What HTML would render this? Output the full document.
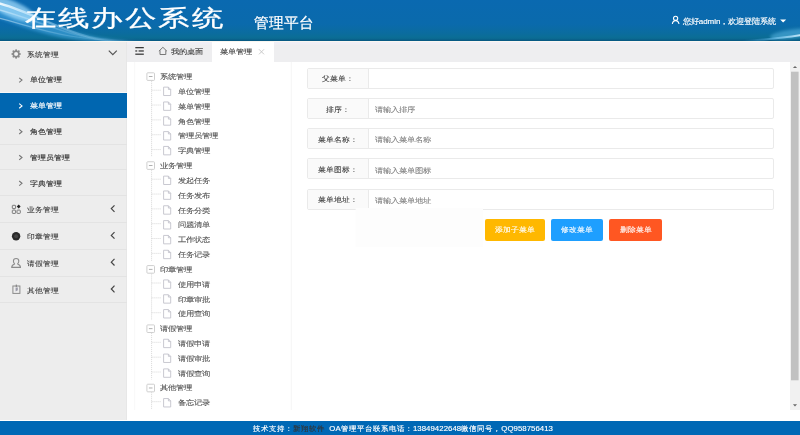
<!DOCTYPE html>
<html><head><meta charset="utf-8"><style>
*{margin:0;padding:0;box-sizing:border-box}
html,body{width:800px;height:435px;overflow:hidden;background:#fff;font-family:"Liberation Sans",sans-serif;}
div,span,svg{position:absolute;white-space:nowrap}
.tx{transform-origin:0 0}
#hdr{left:0;top:0;width:800px;height:41px;background:linear-gradient(to bottom,#0a69b0 0px,#0a6aac 24px,#0b6c9f 33px,#0b6e96 37px,#0a6890 39px,#075a84 40.2px,#075a84 41px);overflow:hidden}
#hdrline{left:0;top:40.8px;width:800px;height:1.8px;background:#faf7f1}
#side{left:0;top:42px;width:126.6px;height:378px;background:#ededed;border-right:1px solid #e7e7e7}
.mi{left:0;width:126.5px;border-bottom:1px solid #e3e3e3}
.act{background:#0066b0;border-bottom:none}
#tabs{left:126.6px;top:42px;width:674px;height:20px;background:linear-gradient(#f0eff6 0px,#f0eff6 2px,#eeeef0 3px,#eeeef0 20px)}
#tab2{left:212px;top:42px;width:62px;height:20px;background:#fff}
#foot{left:0;top:420.5px;width:800px;height:15px;background:#0068b5}
.fl{left:306.5px;width:467px;height:21px;border:1px solid #eaeaea;background:#fff;border-radius:2px}
.fl .lb{left:0;top:0;width:61.5px;height:19px;background:#fafafa;border-right:1px solid #eaeaea}
.btn{top:219px;height:21.5px;border-radius:2px}
</style></head><body>
<div id="hdr"><svg style="left:0;top:0" width="800" height="41" viewBox="0 0 800 41">
<defs>
<filter id="bl" x="-20%" y="-50%" width="140%" height="200%"><feGaussianBlur stdDeviation="1.6"/></filter>
<filter id="bl2" x="-20%" y="-50%" width="140%" height="200%"><feGaussianBlur stdDeviation="0.7"/></filter>
<radialGradient id="g1" cx="0.3" cy="0.4" r="0.6"><stop offset="0" stop-color="#8fd6ff" stop-opacity="0.85"/><stop offset="1" stop-color="#3aa0e0" stop-opacity="0"/></radialGradient>
<linearGradient id="s1" x1="0" x2="1"><stop offset="0" stop-color="#fff" stop-opacity="0.95"/><stop offset="0.12" stop-color="#e0f4ff" stop-opacity="0.8"/><stop offset="0.35" stop-color="#c8ecff" stop-opacity="0.45"/><stop offset="1" stop-color="#9ad8ff" stop-opacity="0"/></linearGradient>
<linearGradient id="s2" x1="1" x2="0"><stop offset="0" stop-color="#e8f8ff" stop-opacity="0.95"/><stop offset="0.5" stop-color="#7fd0ff" stop-opacity="0.5"/><stop offset="1" stop-color="#4ab0f0" stop-opacity="0"/></linearGradient>
</defs>
<path d="M-2 3 C 18 8, 32 16, 60 27 C 80 35, 110 41, 150 42 L 150 44 C 110 44, 80 42, 50 35 C 30 30, 15 24, -2 18 Z" fill="#4fb0ec" opacity="0.5" filter="url(#bl)"/>
<ellipse cx="12" cy="9" rx="26" ry="8" transform="rotate(24 12 9)" fill="#a8e0ff" opacity="0.7" filter="url(#bl)"/>
<path d="M-4 2.5 C 15 7, 28 14, 60 27 S 100 40, 140 42" fill="none" stroke="url(#s1)" stroke-width="2.2" filter="url(#bl2)"/>
<path d="M-4 9 C 20 15, 40 24, 70 33 S 120 42, 180 43" fill="none" stroke="url(#s1)" stroke-width="1.4" filter="url(#bl2)" opacity="0.45"/>
<path d="M-4 17.5 C 20 23, 40 31, 70 36 S 120 42, 160 43" fill="none" stroke="url(#s1)" stroke-width="1.2" filter="url(#bl2)" opacity="0.5"/>
<ellipse cx="792" cy="34" rx="22" ry="4.5" transform="rotate(-8 792 34)" fill="#6cc6f4" opacity="0.45" filter="url(#bl)"/>
<path d="M742 41 C 765 40, 782 38, 805 34.5" fill="none" stroke="url(#s2)" stroke-width="2" filter="url(#bl2)"/>
</svg></div><div id="hdrline"></div>
<div class="tx" style="left:24.80px;top:1.39px;line-height:47.25px;font-size:31.5px;color:#fff;transform:scaleY(0.73);letter-spacing:1.35px;-webkit-text-stroke:0.35px currentColor;">在线办公系统</div>
<div class="tx" style="left:253.50px;top:12.44px;line-height:22.50px;font-size:15.0px;color:#fff;transform:scaleY(1.02);-webkit-text-stroke:0.2px currentColor;">管理平台</div>
<div class="tx" style="left:682.70px;top:15.62px;line-height:12.00px;font-size:8px;color:#fff;transform:scaleY(0.98);-webkit-text-stroke:0.15px currentColor;">您好admin，欢迎登陆系统</div>
<div id="side"></div>
<div class="mi" style="top:42px;height:25px;border-bottom:none"></div>
<div class="tx" style="left:26.60px;top:49.70px;line-height:12.15px;font-size:8.1px;color:#3a3a3a;transform:scaleY(0.9);-webkit-text-stroke:0.1px currentColor;">系统管理</div>
<div class="mi" style="top:67.20px;height:25.8px;border-bottom:none"></div>
<div class="tx" style="left:30.00px;top:74.47px;line-height:12.45px;font-size:8.3px;color:#333;transform:scaleY(0.88);-webkit-text-stroke:0.15px currentColor;">单位管理</div>
<div style="left:0;top:92.4px;width:126.5px;height:1px;background:#f7f7f7"></div>
<div class="mi act" style="top:93.3px;height:24.7px"></div>
<div class="tx" style="left:30.00px;top:100.27px;line-height:12.45px;font-size:8.3px;color:#fff;transform:scaleY(0.88);-webkit-text-stroke:0.15px currentColor;">菜单管理</div>
<div class="mi" style="top:118.80px;height:25.8px"></div>
<div class="tx" style="left:30.00px;top:126.07px;line-height:12.45px;font-size:8.3px;color:#333;transform:scaleY(0.88);-webkit-text-stroke:0.15px currentColor;">角色管理</div>
<div class="mi" style="top:144.60px;height:25.8px"></div>
<div class="tx" style="left:30.00px;top:151.87px;line-height:12.45px;font-size:8.3px;color:#333;transform:scaleY(0.88);-webkit-text-stroke:0.15px currentColor;">管理员管理</div>
<div class="mi" style="top:170.40px;height:25.8px"></div>
<div class="tx" style="left:30.00px;top:177.67px;line-height:12.45px;font-size:8.3px;color:#333;transform:scaleY(0.88);-webkit-text-stroke:0.15px currentColor;">字典管理</div>
<div class="mi" style="top:196.20px;height:26.8px"></div>
<div class="tx" style="left:26.80px;top:205.20px;line-height:12.15px;font-size:8.1px;color:#3a3a3a;transform:scaleY(0.9);-webkit-text-stroke:0.1px currentColor;">业务管理</div>
<div class="mi" style="top:223.00px;height:26.8px"></div>
<div class="tx" style="left:26.80px;top:232.00px;line-height:12.15px;font-size:8.1px;color:#3a3a3a;transform:scaleY(0.9);-webkit-text-stroke:0.1px currentColor;">印章管理</div>
<div class="mi" style="top:249.80px;height:26.8px"></div>
<div class="tx" style="left:26.80px;top:258.80px;line-height:12.15px;font-size:8.1px;color:#3a3a3a;transform:scaleY(0.9);-webkit-text-stroke:0.1px currentColor;">请假管理</div>
<div class="mi" style="top:276.60px;height:26.8px"></div>
<div class="tx" style="left:26.80px;top:285.60px;line-height:12.15px;font-size:8.1px;color:#3a3a3a;transform:scaleY(0.9);-webkit-text-stroke:0.1px currentColor;">其他管理</div>
<div id="tabs"></div><div id="tab2"></div>
<div class="tx" style="left:170.60px;top:46.15px;line-height:12.45px;font-size:8.3px;color:#3a3a3a;transform:scaleY(0.85);-webkit-text-stroke:0.1px currentColor;">我的桌面</div>
<div class="tx" style="left:219.90px;top:46.15px;line-height:12.45px;font-size:8.3px;color:#3a3a3a;transform:scaleY(0.85);-webkit-text-stroke:0.1px currentColor;">菜单管理</div>
<div class="tx" style="left:159.60px;top:72.06px;line-height:12.15px;font-size:8.1px;color:#555;transform:scaleY(0.84);-webkit-text-stroke:0.12px currentColor;">系统管理</div>
<div class="tx" style="left:177.80px;top:86.89px;line-height:12.15px;font-size:8.1px;color:#555;transform:scaleY(0.84);-webkit-text-stroke:0.12px currentColor;">单位管理</div>
<div class="tx" style="left:177.80px;top:101.72px;line-height:12.15px;font-size:8.1px;color:#555;transform:scaleY(0.84);-webkit-text-stroke:0.12px currentColor;">菜单管理</div>
<div class="tx" style="left:177.80px;top:116.55px;line-height:12.15px;font-size:8.1px;color:#555;transform:scaleY(0.84);-webkit-text-stroke:0.12px currentColor;">角色管理</div>
<div class="tx" style="left:177.80px;top:131.38px;line-height:12.15px;font-size:8.1px;color:#555;transform:scaleY(0.84);-webkit-text-stroke:0.12px currentColor;">管理员管理</div>
<div class="tx" style="left:177.80px;top:146.21px;line-height:12.15px;font-size:8.1px;color:#555;transform:scaleY(0.84);-webkit-text-stroke:0.12px currentColor;">字典管理</div>
<div class="tx" style="left:159.60px;top:161.04px;line-height:12.15px;font-size:8.1px;color:#555;transform:scaleY(0.84);-webkit-text-stroke:0.12px currentColor;">业务管理</div>
<div class="tx" style="left:177.80px;top:175.87px;line-height:12.15px;font-size:8.1px;color:#555;transform:scaleY(0.84);-webkit-text-stroke:0.12px currentColor;">发起任务</div>
<div class="tx" style="left:177.80px;top:190.70px;line-height:12.15px;font-size:8.1px;color:#555;transform:scaleY(0.84);-webkit-text-stroke:0.12px currentColor;">任务发布</div>
<div class="tx" style="left:177.80px;top:205.53px;line-height:12.15px;font-size:8.1px;color:#555;transform:scaleY(0.84);-webkit-text-stroke:0.12px currentColor;">任务分类</div>
<div class="tx" style="left:177.80px;top:220.36px;line-height:12.15px;font-size:8.1px;color:#555;transform:scaleY(0.84);-webkit-text-stroke:0.12px currentColor;">问题清单</div>
<div class="tx" style="left:177.80px;top:235.19px;line-height:12.15px;font-size:8.1px;color:#555;transform:scaleY(0.84);-webkit-text-stroke:0.12px currentColor;">工作状态</div>
<div class="tx" style="left:177.80px;top:250.02px;line-height:12.15px;font-size:8.1px;color:#555;transform:scaleY(0.84);-webkit-text-stroke:0.12px currentColor;">任务记录</div>
<div class="tx" style="left:159.60px;top:264.85px;line-height:12.15px;font-size:8.1px;color:#555;transform:scaleY(0.84);-webkit-text-stroke:0.12px currentColor;">印章管理</div>
<div class="tx" style="left:177.80px;top:279.68px;line-height:12.15px;font-size:8.1px;color:#555;transform:scaleY(0.84);-webkit-text-stroke:0.12px currentColor;">使用申请</div>
<div class="tx" style="left:177.80px;top:294.51px;line-height:12.15px;font-size:8.1px;color:#555;transform:scaleY(0.84);-webkit-text-stroke:0.12px currentColor;">印章审批</div>
<div class="tx" style="left:177.80px;top:309.34px;line-height:12.15px;font-size:8.1px;color:#555;transform:scaleY(0.84);-webkit-text-stroke:0.12px currentColor;">使用查询</div>
<div class="tx" style="left:159.60px;top:324.17px;line-height:12.15px;font-size:8.1px;color:#555;transform:scaleY(0.84);-webkit-text-stroke:0.12px currentColor;">请假管理</div>
<div class="tx" style="left:177.80px;top:339.00px;line-height:12.15px;font-size:8.1px;color:#555;transform:scaleY(0.84);-webkit-text-stroke:0.12px currentColor;">请假申请</div>
<div class="tx" style="left:177.80px;top:353.83px;line-height:12.15px;font-size:8.1px;color:#555;transform:scaleY(0.84);-webkit-text-stroke:0.12px currentColor;">请假审批</div>
<div class="tx" style="left:177.80px;top:368.66px;line-height:12.15px;font-size:8.1px;color:#555;transform:scaleY(0.84);-webkit-text-stroke:0.12px currentColor;">请假查询</div>
<div class="tx" style="left:159.60px;top:383.49px;line-height:12.15px;font-size:8.1px;color:#555;transform:scaleY(0.84);-webkit-text-stroke:0.12px currentColor;">其他管理</div>
<div class="tx" style="left:177.80px;top:398.32px;line-height:12.15px;font-size:8.1px;color:#555;transform:scaleY(0.84);-webkit-text-stroke:0.12px currentColor;">备忘记录</div>
<div class="fl" style="top:67.7px"><div class="lb"></div></div>
<div style="left:306.5px;top:73.4px;width:62px;height:12px;line-height:12px;text-align:center;font-size:8.2px;color:#333;transform:scaleY(.9);-webkit-text-stroke:.08px #333">父菜单：</div>
<div class="fl" style="top:97.9px"><div class="lb"></div></div>
<div style="left:306.5px;top:103.6px;width:62px;height:12px;line-height:12px;text-align:center;font-size:8.2px;color:#333;transform:scaleY(.9);-webkit-text-stroke:.08px #333">排序：</div>
<div class="tx" style="left:374.90px;top:105.26px;line-height:12.15px;font-size:8.1px;color:#7a7a7a;transform:scaleY(0.84);-webkit-text-stroke:0.08px currentColor;">请输入排序</div>
<div class="fl" style="top:128.1px"><div class="lb"></div></div>
<div style="left:306.5px;top:133.8px;width:62px;height:12px;line-height:12px;text-align:center;font-size:8.2px;color:#333;transform:scaleY(.9);-webkit-text-stroke:.08px #333">菜单名称：</div>
<div class="tx" style="left:374.90px;top:135.46px;line-height:12.15px;font-size:8.1px;color:#7a7a7a;transform:scaleY(0.84);-webkit-text-stroke:0.08px currentColor;">请输入菜单名称</div>
<div class="fl" style="top:158.3px"><div class="lb"></div></div>
<div style="left:306.5px;top:164.0px;width:62px;height:12px;line-height:12px;text-align:center;font-size:8.2px;color:#333;transform:scaleY(.9);-webkit-text-stroke:.08px #333">菜单图标：</div>
<div class="tx" style="left:374.90px;top:165.66px;line-height:12.15px;font-size:8.1px;color:#7a7a7a;transform:scaleY(0.84);-webkit-text-stroke:0.08px currentColor;">请输入菜单图标</div>
<div class="fl" style="top:188.5px"><div class="lb"></div></div>
<div style="left:306.5px;top:194.2px;width:62px;height:12px;line-height:12px;text-align:center;font-size:8.2px;color:#333;transform:scaleY(.9);-webkit-text-stroke:.08px #333">菜单地址：</div>
<div class="tx" style="left:374.90px;top:195.86px;line-height:12.15px;font-size:8.1px;color:#7a7a7a;transform:scaleY(0.84);-webkit-text-stroke:0.08px currentColor;">请输入菜单地址</div>
<div class="btn" style="left:485px;width:60.2px;background:#ffb800"></div>
<div class="btn" style="left:551.2px;width:52px;background:#1e9fff"></div>
<div class="btn" style="left:609px;width:53px;background:#ff5722"></div>
<div style="left:485px;top:223.5px;width:60.2px;height:12px;line-height:12px;text-align:center;font-size:8.2px;color:#fff;transform:scaleY(.9);-webkit-text-stroke:.12px #fff">添加子菜单</div>
<div style="left:551.2px;top:223.5px;width:52px;height:12px;line-height:12px;text-align:center;font-size:8.2px;color:#fff;transform:scaleY(.9);-webkit-text-stroke:.12px #fff">修改菜单</div>
<div style="left:609px;top:223.5px;width:53px;height:12px;line-height:12px;text-align:center;font-size:8.2px;color:#fff;transform:scaleY(.9);-webkit-text-stroke:.12px #fff">删除菜单</div>
<div id="foot"></div>
<div class="tx" style="left:252.50px;top:422.95px;line-height:11.70px;font-size:7.8px;color:#fff;transform:scaleY(0.95);letter-spacing:0.04px;-webkit-text-stroke:0.15px currentColor;">技术支持：<span style="position:static;color:#333">新翔软件</span>&nbsp; OA管理平台联系电话：13849422648微信同号，QQ958756413</div>
<svg style="left:0;top:0" width="800" height="435" viewBox="0 0 800 435"><circle cx="675.6" cy="18.3" r="2.1" fill="none" stroke="#fff" stroke-width="1.1"/><path d="M672.3 24 Q672.8 20.6 675.6 20.6 Q678.4 20.6 679 24" fill="none" stroke="#fff" stroke-width="1.1"/><path d="M780.1 19.5 L786.2 19.5 L783.15 22.6 Z" fill="#fff"/><circle cx="16.1" cy="54" r="2.8" fill="none" stroke="#8a8a8a" stroke-width="1.5"/><circle cx="19.80" cy="54.00" r="1.05" fill="#8a8a8a"/><circle cx="18.72" cy="56.62" r="1.05" fill="#8a8a8a"/><circle cx="16.10" cy="57.70" r="1.05" fill="#8a8a8a"/><circle cx="13.48" cy="56.62" r="1.05" fill="#8a8a8a"/><circle cx="12.40" cy="54.00" r="1.05" fill="#8a8a8a"/><circle cx="13.48" cy="51.38" r="1.05" fill="#8a8a8a"/><circle cx="16.10" cy="50.30" r="1.05" fill="#8a8a8a"/><circle cx="18.72" cy="51.38" r="1.05" fill="#8a8a8a"/><circle cx="16.1" cy="54" r="1.1" fill="#f4f4f4"/><polyline points="108.8,50.6 112.8,54.6 116.8,50.6" fill="none" stroke="#555" stroke-width="1.2"/><polyline points="19.2,77.80 22,80.10 19.2,82.40" fill="none" stroke="#777" stroke-width="1.1"/><polyline points="19.2,103.60 22,105.90 19.2,108.20" fill="none" stroke="#fff" stroke-width="1.1"/><polyline points="19.2,129.40 22,131.70 19.2,134.00" fill="none" stroke="#777" stroke-width="1.1"/><polyline points="19.2,155.20 22,157.50 19.2,159.80" fill="none" stroke="#777" stroke-width="1.1"/><polyline points="19.2,181.00 22,183.30 19.2,185.60" fill="none" stroke="#777" stroke-width="1.1"/><polyline points="114.5,205.30 111.3,208.60 114.5,211.90" fill="none" stroke="#444" stroke-width="1.2"/><polyline points="114.5,232.10 111.3,235.40 114.5,238.70" fill="none" stroke="#444" stroke-width="1.2"/><polyline points="114.5,258.90 111.3,262.20 114.5,265.50" fill="none" stroke="#444" stroke-width="1.2"/><polyline points="114.5,285.70 111.3,289.00 114.5,292.30" fill="none" stroke="#444" stroke-width="1.2"/><rect x="12.3" y="205.3" width="3.3" height="3.3" fill="none" stroke="#7a7a7a" stroke-width="1" rx="0.6"/><rect x="12.3" y="210.1" width="3.3" height="3.3" fill="none" stroke="#7a7a7a" stroke-width="1" rx="0.6"/><rect x="17" y="210.1" width="3.3" height="3.3" fill="none" stroke="#7a7a7a" stroke-width="1" rx="0.6"/><path d="M18.7 204.6 L20.6 206.6 L18.7 208.6 L16.8 206.6 Z" fill="#222"/><circle cx="16.1" cy="236.2" r="4.2" fill="#2a2a2a"/><circle cx="16.1" cy="236.2" r="2" fill="#444"/><path d="M11.7 267.4 C 11.7 265.4, 13 264.4, 14.6 263.9 C 13.5 263, 13.4 261.8, 13.4 261.1 C 13.4 259.4, 14.6 258.5, 16.1 258.5 C 17.6 258.5, 18.8 259.4, 18.8 261.1 C 18.8 261.8, 18.7 263, 17.6 263.9 C 19.2 264.4, 20.5 265.4, 20.5 267.4 Z" fill="none" stroke="#8c8c8c" stroke-width="1.1" stroke-linejoin="round"/><rect x="12.9" y="286" width="7" height="7.4" fill="none" stroke="#8a8a8a" stroke-width="1"/><path d="M15.6 287.5 L17.8 287.5 L17.8 290.3 L15.6 291.6 Z" fill="#9a9aa8"/><rect x="15.7" y="284.6" width="1.3" height="2.4" fill="#8a8a8a"/><rect x="135.3" y="47.1" width="8.5" height="1.15" fill="#262626"/><rect x="135.3" y="50.4" width="1.9" height="1.15" fill="#262626"/><rect x="138.6" y="50.4" width="5.2" height="1.15" fill="#262626"/><rect x="135.3" y="53.6" width="8.5" height="1.15" fill="#262626"/><path d="M158.9 51.2 L162.9 47.3 L166.9 51.2 M160 50.3 L160 54.5 L165.8 54.5 L165.8 50.3" fill="none" stroke="#777" stroke-width="1"/><path d="M259 49.3 L264 54.3 M264 49.3 L259 54.3" stroke="#c4c4c4" stroke-width="0.9"/><rect x="146.9" y="72.80" width="7.6" height="7.6" rx="0.8" fill="#fff" stroke="#c9c9c9" stroke-width="0.9"/><rect x="148.9" y="76.10" width="3.6" height="0.9" fill="#a8a8a8"/><line x1="151.6" y1="80.80" x2="151.6" y2="156.95" stroke="#d2d2d2" stroke-width="0.9" stroke-dasharray="1 1"/><line x1="151.6" y1="90.23" x2="161.3" y2="90.23" stroke="#d2d2d2" stroke-width="0.9" stroke-dasharray="1 1"/><path d="M163.6 87.13 L168.4 87.13 L170.7 89.43 L170.7 95.53 L163.6 95.53 Z M168.4 87.13 L168.4 89.43 L170.7 89.43" fill="#fff" stroke="#c3c3cc" stroke-width="0.9" stroke-linejoin="round"/><line x1="151.6" y1="105.06" x2="161.3" y2="105.06" stroke="#d2d2d2" stroke-width="0.9" stroke-dasharray="1 1"/><path d="M163.6 101.96 L168.4 101.96 L170.7 104.26 L170.7 110.36 L163.6 110.36 Z M168.4 101.96 L168.4 104.26 L170.7 104.26" fill="#fff" stroke="#c3c3cc" stroke-width="0.9" stroke-linejoin="round"/><line x1="151.6" y1="119.89" x2="161.3" y2="119.89" stroke="#d2d2d2" stroke-width="0.9" stroke-dasharray="1 1"/><path d="M163.6 116.79 L168.4 116.79 L170.7 119.09 L170.7 125.19 L163.6 125.19 Z M168.4 116.79 L168.4 119.09 L170.7 119.09" fill="#fff" stroke="#c3c3cc" stroke-width="0.9" stroke-linejoin="round"/><line x1="151.6" y1="134.72" x2="161.3" y2="134.72" stroke="#d2d2d2" stroke-width="0.9" stroke-dasharray="1 1"/><path d="M163.6 131.62 L168.4 131.62 L170.7 133.92 L170.7 140.02 L163.6 140.02 Z M168.4 131.62 L168.4 133.92 L170.7 133.92" fill="#fff" stroke="#c3c3cc" stroke-width="0.9" stroke-linejoin="round"/><line x1="151.6" y1="149.55" x2="161.3" y2="149.55" stroke="#d2d2d2" stroke-width="0.9" stroke-dasharray="1 1"/><path d="M163.6 146.45 L168.4 146.45 L170.7 148.75 L170.7 154.85 L163.6 154.85 Z M168.4 146.45 L168.4 148.75 L170.7 148.75" fill="#fff" stroke="#c3c3cc" stroke-width="0.9" stroke-linejoin="round"/><rect x="146.9" y="161.78" width="7.6" height="7.6" rx="0.8" fill="#fff" stroke="#c9c9c9" stroke-width="0.9"/><rect x="148.9" y="165.08" width="3.6" height="0.9" fill="#a8a8a8"/><line x1="151.6" y1="169.78" x2="151.6" y2="260.76" stroke="#d2d2d2" stroke-width="0.9" stroke-dasharray="1 1"/><line x1="151.6" y1="179.21" x2="161.3" y2="179.21" stroke="#d2d2d2" stroke-width="0.9" stroke-dasharray="1 1"/><path d="M163.6 176.11 L168.4 176.11 L170.7 178.41 L170.7 184.51 L163.6 184.51 Z M168.4 176.11 L168.4 178.41 L170.7 178.41" fill="#fff" stroke="#c3c3cc" stroke-width="0.9" stroke-linejoin="round"/><line x1="151.6" y1="194.04" x2="161.3" y2="194.04" stroke="#d2d2d2" stroke-width="0.9" stroke-dasharray="1 1"/><path d="M163.6 190.94 L168.4 190.94 L170.7 193.24 L170.7 199.34 L163.6 199.34 Z M168.4 190.94 L168.4 193.24 L170.7 193.24" fill="#fff" stroke="#c3c3cc" stroke-width="0.9" stroke-linejoin="round"/><line x1="151.6" y1="208.87" x2="161.3" y2="208.87" stroke="#d2d2d2" stroke-width="0.9" stroke-dasharray="1 1"/><path d="M163.6 205.77 L168.4 205.77 L170.7 208.07 L170.7 214.17 L163.6 214.17 Z M168.4 205.77 L168.4 208.07 L170.7 208.07" fill="#fff" stroke="#c3c3cc" stroke-width="0.9" stroke-linejoin="round"/><line x1="151.6" y1="223.70" x2="161.3" y2="223.70" stroke="#d2d2d2" stroke-width="0.9" stroke-dasharray="1 1"/><path d="M163.6 220.60 L168.4 220.60 L170.7 222.90 L170.7 229.00 L163.6 229.00 Z M168.4 220.60 L168.4 222.90 L170.7 222.90" fill="#fff" stroke="#c3c3cc" stroke-width="0.9" stroke-linejoin="round"/><line x1="151.6" y1="238.53" x2="161.3" y2="238.53" stroke="#d2d2d2" stroke-width="0.9" stroke-dasharray="1 1"/><path d="M163.6 235.43 L168.4 235.43 L170.7 237.73 L170.7 243.83 L163.6 243.83 Z M168.4 235.43 L168.4 237.73 L170.7 237.73" fill="#fff" stroke="#c3c3cc" stroke-width="0.9" stroke-linejoin="round"/><line x1="151.6" y1="253.36" x2="161.3" y2="253.36" stroke="#d2d2d2" stroke-width="0.9" stroke-dasharray="1 1"/><path d="M163.6 250.26 L168.4 250.26 L170.7 252.56 L170.7 258.66 L163.6 258.66 Z M168.4 250.26 L168.4 252.56 L170.7 252.56" fill="#fff" stroke="#c3c3cc" stroke-width="0.9" stroke-linejoin="round"/><rect x="146.9" y="265.59" width="7.6" height="7.6" rx="0.8" fill="#fff" stroke="#c9c9c9" stroke-width="0.9"/><rect x="148.9" y="268.89" width="3.6" height="0.9" fill="#a8a8a8"/><line x1="151.6" y1="273.59" x2="151.6" y2="320.08" stroke="#d2d2d2" stroke-width="0.9" stroke-dasharray="1 1"/><line x1="151.6" y1="283.02" x2="161.3" y2="283.02" stroke="#d2d2d2" stroke-width="0.9" stroke-dasharray="1 1"/><path d="M163.6 279.92 L168.4 279.92 L170.7 282.22 L170.7 288.32 L163.6 288.32 Z M168.4 279.92 L168.4 282.22 L170.7 282.22" fill="#fff" stroke="#c3c3cc" stroke-width="0.9" stroke-linejoin="round"/><line x1="151.6" y1="297.85" x2="161.3" y2="297.85" stroke="#d2d2d2" stroke-width="0.9" stroke-dasharray="1 1"/><path d="M163.6 294.75 L168.4 294.75 L170.7 297.05 L170.7 303.15 L163.6 303.15 Z M168.4 294.75 L168.4 297.05 L170.7 297.05" fill="#fff" stroke="#c3c3cc" stroke-width="0.9" stroke-linejoin="round"/><line x1="151.6" y1="312.68" x2="161.3" y2="312.68" stroke="#d2d2d2" stroke-width="0.9" stroke-dasharray="1 1"/><path d="M163.6 309.58 L168.4 309.58 L170.7 311.88 L170.7 317.98 L163.6 317.98 Z M168.4 309.58 L168.4 311.88 L170.7 311.88" fill="#fff" stroke="#c3c3cc" stroke-width="0.9" stroke-linejoin="round"/><rect x="146.9" y="324.91" width="7.6" height="7.6" rx="0.8" fill="#fff" stroke="#c9c9c9" stroke-width="0.9"/><rect x="148.9" y="328.21" width="3.6" height="0.9" fill="#a8a8a8"/><line x1="151.6" y1="332.91" x2="151.6" y2="379.40" stroke="#d2d2d2" stroke-width="0.9" stroke-dasharray="1 1"/><line x1="151.6" y1="342.34" x2="161.3" y2="342.34" stroke="#d2d2d2" stroke-width="0.9" stroke-dasharray="1 1"/><path d="M163.6 339.24 L168.4 339.24 L170.7 341.54 L170.7 347.64 L163.6 347.64 Z M168.4 339.24 L168.4 341.54 L170.7 341.54" fill="#fff" stroke="#c3c3cc" stroke-width="0.9" stroke-linejoin="round"/><line x1="151.6" y1="357.17" x2="161.3" y2="357.17" stroke="#d2d2d2" stroke-width="0.9" stroke-dasharray="1 1"/><path d="M163.6 354.07 L168.4 354.07 L170.7 356.37 L170.7 362.47 L163.6 362.47 Z M168.4 354.07 L168.4 356.37 L170.7 356.37" fill="#fff" stroke="#c3c3cc" stroke-width="0.9" stroke-linejoin="round"/><line x1="151.6" y1="372.00" x2="161.3" y2="372.00" stroke="#d2d2d2" stroke-width="0.9" stroke-dasharray="1 1"/><path d="M163.6 368.90 L168.4 368.90 L170.7 371.20 L170.7 377.30 L163.6 377.30 Z M168.4 368.90 L168.4 371.20 L170.7 371.20" fill="#fff" stroke="#c3c3cc" stroke-width="0.9" stroke-linejoin="round"/><rect x="146.9" y="384.23" width="7.6" height="7.6" rx="0.8" fill="#fff" stroke="#c9c9c9" stroke-width="0.9"/><rect x="148.9" y="387.53" width="3.6" height="0.9" fill="#a8a8a8"/><line x1="151.6" y1="392.23" x2="151.6" y2="409.06" stroke="#d2d2d2" stroke-width="0.9" stroke-dasharray="1 1"/><line x1="151.6" y1="401.66" x2="161.3" y2="401.66" stroke="#d2d2d2" stroke-width="0.9" stroke-dasharray="1 1"/><path d="M163.6 398.56 L168.4 398.56 L170.7 400.86 L170.7 406.96 L163.6 406.96 Z M168.4 398.56 L168.4 400.86 L170.7 400.86" fill="#fff" stroke="#c3c3cc" stroke-width="0.9" stroke-linejoin="round"/><rect x="790" y="62" width="10" height="348" fill="#f1f1f1"/><rect x="791" y="71.7" width="7.6" height="308.6" fill="#c1c1c1"/><path d="M792.9 68.1 L797.1 68.1 L795 66 Z" fill="#6a6a6a"/><path d="M792.9 404.2 L797.1 404.2 L795 406.5 Z" fill="#6a6a6a"/><line x1="134.7" y1="62" x2="134.7" y2="410" stroke="#f8f8f8" stroke-width="1"/><line x1="291.3" y1="62" x2="291.3" y2="410" stroke="#f5f5f5" stroke-width="1"/><rect x="355.6" y="208" width="127.4" height="39" fill="#fdfdfd"/></svg>
</body></html>
